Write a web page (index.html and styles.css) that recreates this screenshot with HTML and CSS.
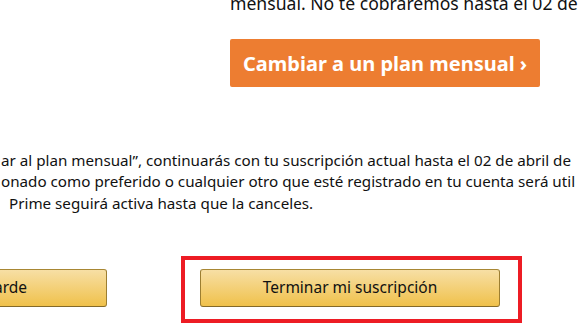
FILE: index.html
```html
<!DOCTYPE html>
<html lang="es">
<head>
<meta charset="utf-8">
<title>Terminar membresía</title>
<link rel="stylesheet" href="styles.css">
</head>
<body>
<div class="page">
  <div class="offer">
    <p class="offer-text">mensual. No te cobraremos hasta el 02 de</p>
    <a class="btn-orange" href="#">Cambiar a un plan mensual ›</a>
  </div>
  <div class="note">
    <div class="note-line">ar al plan mensual”, continuarás con tu suscripción actual hasta el 02 de abril de</div>
    <div class="note-line">onado como preferido o cualquier otro que esté registrado en tu cuenta será util</div>
    <div class="note-line indent">Prime seguirá activa hasta que la canceles.</div>
  </div>
  <div class="actions">
    <a class="btn-yellow btn-later" href="#">Decidir más tarde</a>
    <div class="highlight">
      <a class="btn-yellow btn-end" href="#">Terminar mi suscripción</a>
    </div>
  </div>
</div>
</body>
</html>
```

FILE: styles.css
```css
html, body {
  margin: 0;
  padding: 0;
  background: #ffffff;
}
body {
  width: 584px;
  height: 329px;
  overflow: hidden;
  font-family: "Noto Sans", "Open Sans", sans-serif;
  color: #111111;
}
.page {
  display: flex;
  flex-direction: column;
}
.offer {
  display: flex;
  flex-direction: column;
  align-items: flex-start;
  margin-left: 230px;
}
.offer-text {
  margin: -7.3px 0 0 0;
  font-size: 17.6px;
  line-height: 20px;
  white-space: nowrap;
}
.btn-orange {
  margin-top: 26.3px;
  height: 48px;
  padding: 0 13px;
  display: flex;
  align-items: center;
  background: #ed7d31;
  border-radius: 2px;
  color: #ffffff;
  font-weight: 700;
  font-size: 20px;
  text-decoration: none;
  white-space: nowrap;
}
.note {
  margin-top: 62.5px;
  font-size: 15.2px;
  line-height: 21.5px;
}
.note-line {
  white-space: nowrap;
  padding-left: 1px;
}
.note-line.indent {
  padding-left: 9px;
}
.actions {
  margin-top: 42px;
  display: flex;
  align-items: flex-start;
}
.btn-yellow {
  box-sizing: border-box;
  height: 38px;
  display: flex;
  align-items: center;
  justify-content: center;
  padding-bottom: 3px;
  border: 1px solid;
  border-color: #a88734 #9c7e31 #846a29;
  border-radius: 3px;
  background: linear-gradient(to bottom, #f7dfa5, #f0c14b);
  color: #111111;
  font-size: 15.5px;
  text-decoration: none;
  white-space: nowrap;
}
.btn-later {
  margin-top: 13px;
  margin-left: -100px;
  width: 207px;
  justify-content: flex-end;
  padding-right: 79px;
  overflow: hidden;
}
.highlight {
  margin-left: 74px;
  border: 4px solid #ed1c24;
  padding: 9px 18px 12px 15px;
}
.btn-end {
  width: 300px;
}
```
